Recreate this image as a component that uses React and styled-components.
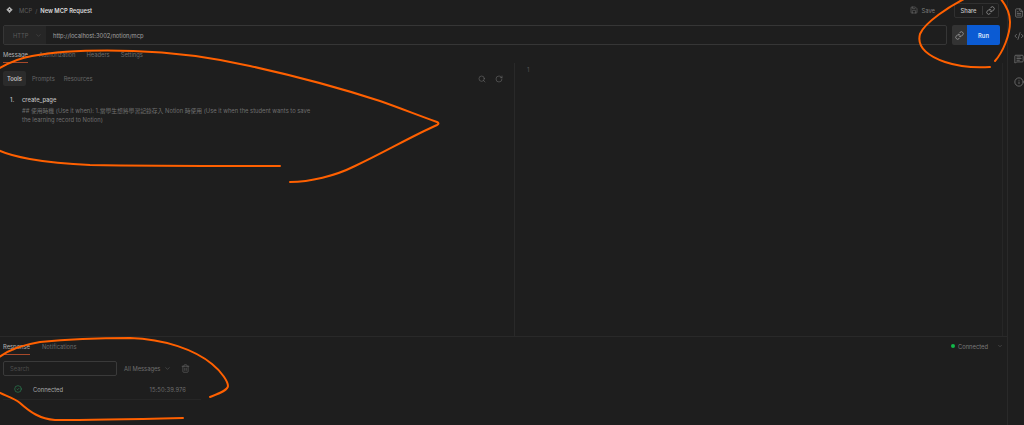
import React from 'react';
import styled, {createGlobalStyle} from 'styled-components';
import {
  Save, Link, ChevronDown, Search, RotateCw, Trash2, CircleCheck,
  FileText, CodeXml, MessageSquareText, Info,
} from 'lucide-react';

const GlobalStyle = createGlobalStyle`
  html, body { margin: 0; height: 100%; background: #1e1e1e; }
  body { font-family: Inter, "Noto Sans CJK TC", sans-serif; color: #a6a6a6; overflow: hidden; }
  * { box-sizing: border-box; }
`;

const Page = styled.div`
  position: relative;
  width: 1024px;
  height: 425px;
  display: flex;
  background: #1e1e1e;
  overflow: hidden;
`;
const Main = styled.div`
  width: 1007px;
  display: flex;
  flex-direction: column;
`;
const Sidebar = styled.aside`
  flex: 1;
  border-left: 1px solid #292929;
  display: flex;
  flex-direction: column;
  align-items: center;
  gap: 13px;
  padding: 8px 0 0 5px;
  color: #8e8e8e;
`;
const TopBar = styled.header`
  height: 20px;
  padding: 0 8px 0 6px;
  display: flex;
  align-items: center;
  font-size: 5.8px;
`;
const Crumb = styled.span`
  color: ${p => (p.$active ? '#dcdcdc' : '#5e5e5e')};
  font-weight: ${p => (p.$active ? 600 : 400)};
  margin-left: ${p => p.$gap || 0}px;
`;
const SaveButton = styled.span`
  margin-left: auto;
  display: flex;
  align-items: center;
  gap: 4px;
  color: #7c7c7c;
`;
const ShareGroup = styled.div`
  margin-left: 19px;
  width: 45px;
  height: 15px;
  display: flex;
  align-items: center;
  border: 1px solid #303030;
  border-radius: 2px;
  color: #c8c8c8;
`;
const ShareLabel = styled.span`
  flex: 1;
  text-align: center;
  font-weight: 500;
`;
const ShareLink = styled.span`
  width: 16px;
  height: 9px;
  display: flex;
  align-items: center;
  justify-content: center;
  border-left: 1px solid #3a3a3a;
`;
const UrlRow = styled.div`
  height: 20px;
  margin-top: 5px;
  padding: 0 7px 0 3px;
  display: flex;
  gap: 5px;
`;
const UrlField = styled.div`
  flex: 1;
  display: flex;
  align-items: center;
  border: 1px solid #363636;
  border-radius: 2px;
  font-size: 5.8px;
`;
const Method = styled.div`
  width: 42px;
  height: 100%;
  display: flex;
  align-items: center;
  gap: 6px;
  padding-left: 9px;
  background: #262626;
  color: #5a5a5a;
`;
const Url = styled.span`
  margin-left: 7px;
  color: #a2a2a2;
`;
const RunGroup = styled.div`
  width: 48px;
  display: flex;
  border-radius: 2px;
  overflow: hidden;
`;
const RunIcon = styled.span`
  width: 15px;
  display: flex;
  align-items: center;
  justify-content: center;
  background: #333333;
  color: #c8c8c8;
`;
const RunButton = styled.span`
  flex: 1;
  display: flex;
  align-items: center;
  justify-content: center;
  background: #0b5bd3;
  color: #dfe8fa;
  font-size: 5.8px;
  font-weight: 600;
`;
const Tabs = styled.nav`
  height: 18px;
  padding: 5px 0 0 3px;
  display: flex;
  gap: ${p => p.$gap}px;
  font-size: 5.8px;
`;
const Tab = styled.span`
  height: 13px;
  padding-top: 1px;
  color: ${p => (p.$active ? '#b4b4b4' : '#6a6a6a')};
  border-bottom: 1px solid ${p => (p.$active ? '#a8492a' : 'transparent')};
`;
const Editor = styled.section`
  height: 274px;
  display: flex;
  border-bottom: 1px solid #292929;
`;
const ToolsPane = styled.div`
  width: 515px;
  border-right: 1px solid #292929;
  padding: 8px 11px 0 3px;
`;
const SubBar = styled.div`
  display: flex;
  align-items: center;
  font-size: 5.8px;
  color: #6e6e6e;
`;
const SubTab = styled.span`
  height: 15px;
  display: flex;
  align-items: center;
  padding: 0 ${p => p.$pad || 0}px;
  margin-right: ${p => p.$gap || 0}px;
  border-radius: 2px;
  background: ${p => (p.$active ? '#2b2b2b' : 'transparent')};
  color: ${p => (p.$active ? '#d0d0d0' : '#666666')};
  font-weight: ${p => (p.$active ? 500 : 400)};
`;
const SubIcons = styled.span`
  margin-left: auto;
  display: flex;
  gap: 9px;
  color: #777777;
`;
const ToolItem = styled.div`
  display: flex;
  margin: 9px 0 0 7px;
  font-size: 5.8px;
  line-height: 9px;
`;
const ToolIndex = styled.span`
  width: 12px;
  color: #c0c0c0;
  font-weight: 500;
`;
const ToolBody = styled.div`
  width: 294px;
`;
const ToolName = styled.div`
  color: #c0c0c0;
  font-weight: 500;
  margin-bottom: 2px;
`;
const ToolText = styled.div`
  color: #6f6f6f;
`;
const ResultPane = styled.div`
  flex: 1;
  padding: 3px 0 0 12px;
  font-size: 5.8px;
  color: #565656;
  border-right: 1px solid #262626;
  margin-right: 4px;
`;
const ResponseHead = styled.div`
  height: 18px;
  display: flex;
  justify-content: space-between;
  padding-right: 4px;
`;
const Status = styled.div`
  display: flex;
  align-items: center;
  gap: 3px;
  font-size: 5.8px;
  color: #7a7a7a;
`;
const StatusChevron = styled(ChevronDown)`
  margin-left: 6px;
`;
const Dot = styled.span`
  width: 4px;
  height: 4px;
  border-radius: 50%;
  background: #12b84a;
`;
const Filters = styled.div`
  width: 201px;
  margin: 6px 0 0 3px;
  display: flex;
  align-items: center;
  font-size: 5.8px;
`;
const SearchBox = styled.div`
  width: 114px;
  height: 15px;
  display: flex;
  align-items: center;
  padding-left: 6px;
  border: 1px solid #3a3a3a;
  border-radius: 2px;
  color: #4c4c4c;
`;
const Select = styled.span`
  margin-left: 7px;
  display: flex;
  align-items: center;
  gap: 4px;
  color: #6e6e6e;
`;
const TrashWrap = styled.span`
  margin-left: 10px;
  display: flex;
  color: #6e6e6e;
`;
const LogRow = styled.div`
  width: 198px;
  height: 23px;
  margin: 1px 0 0 3px;
  display: flex;
  align-items: center;
  padding: 2px 0 0 11px;
  font-size: 5.8px;
  border-bottom: 1px solid #262626;
`;
const LogText = styled.span`
  margin-left: 11px;
  color: #a8a8a8;
`;
const LogTime = styled.span`
  margin-left: auto;
  padding-right: 15px;
  color: #6e6e6e;
  letter-spacing: 0.1px;
`;
const Scribble = styled.svg`
  position: absolute;
  inset: 0;
  pointer-events: none;
`;
const Stroke = styled.path`
  fill: none;
  stroke: #ff6000;
  stroke-width: 2;
  stroke-linecap: round;
  stroke-linejoin: round;
`;

// marker strokes someone drew on top of the screenshot
const strokes = [
  'M-2 69C10 62 20 58 32 56C60 51 100 50 133 51C170 52 210 57 250 66C300 77 340 88 380 101C400 108 420 116 437 122C439 123 439 124 437 125C410 137 385 152 355 166C335 176 310 182 290 182',
  'M-2 150C10 156 40 163 90 165C150 166 220 166 280 166',
  'M966 -2C950 6 925 22 920 34C917 45 925 55 945 62C960 67 975 68 990 67',
  'M1000 -2C1006 5 1010 14 1010 22C1010 35 1003 52 995 61',
  'M-2 358C8 350 22 345 40 342C70 339 100 338 130 338C165 339 195 350 212 364C222 372 228 382 228 386C228 390 220 393 210 397',
  'M-2 392C6 396 14 398 20 403C30 412 40 419 55 420C90 420 140 419 183 418',
];

const McpLogo = () => (
  <svg width="7" height="8" viewBox="0 0 12 12" fill="#b0b0b0">
    <path d="M6 0.5 11.5 5.5 7.5 9.5 6 11.5 4.5 9.5 0.5 5.5Z" />
    <circle cx="6" cy="5" r="1" fill="#1e1e1e" />
  </svg>
);

const App = () => {
  return (
    <Page>
      <GlobalStyle />
      <Main>
        <TopBar>
          <McpLogo />
          <Crumb $gap={6}>MCP</Crumb>
          <Crumb $gap={3}>/</Crumb>
          <Crumb $active $gap={3}>New MCP Request</Crumb>
          <SaveButton><Save size={8} strokeWidth={1.5} />Save</SaveButton>
          <ShareGroup>
            <ShareLabel>Share</ShareLabel>
            <ShareLink><Link size={9} strokeWidth={1.5} /></ShareLink>
          </ShareGroup>
        </TopBar>
        <UrlRow>
          <UrlField>
            <Method>HTTP <ChevronDown size={7} strokeWidth={1.5} /></Method>
            <Url>http://localhost:3002/notion/mcp</Url>
          </UrlField>
          <RunGroup>
            <RunIcon><Link size={9} strokeWidth={1.5} /></RunIcon>
            <RunButton>Run</RunButton>
          </RunGroup>
        </UrlRow>
        <Tabs $gap={11}>
          <Tab $active>Message</Tab>
          <Tab>Authorization</Tab>
          <Tab>Headers</Tab>
          <Tab>Settings</Tab>
        </Tabs>
        <Editor>
          <ToolsPane>
            <SubBar>
              <SubTab $active $pad={4} $gap={6}>Tools</SubTab>
              <SubTab $gap={9}>Prompts</SubTab>
              <SubTab>Resources</SubTab>
              <SubIcons>
                <Search size={8} strokeWidth={1.5} />
                <RotateCw size={8} strokeWidth={1.5} />
              </SubIcons>
            </SubBar>
            <ToolItem>
              <ToolIndex>1.</ToolIndex>
              <ToolBody>
                <ToolName>create_page</ToolName>
                <ToolText>## 使用時機 (Use it when): 1.當學生想將學習記錄存入 Notion 時使用 (Use it when the student wants to save the learning record to Notion)</ToolText>
              </ToolBody>
            </ToolItem>
          </ToolsPane>
          <ResultPane>1</ResultPane>
        </Editor>
        <ResponseHead>
          <Tabs $gap={12}>
            <Tab $active>Response</Tab>
            <Tab>Notifications</Tab>
          </Tabs>
          <Status>
            <Dot />
            Connected
            <StatusChevron size={6} strokeWidth={1.5} />
          </Status>
        </ResponseHead>
        <Filters>
          <SearchBox>Search</SearchBox>
          <Select>All Messages <ChevronDown size={7} strokeWidth={1.5} /></Select>
          <TrashWrap><Trash2 size={9} strokeWidth={1.5} /></TrashWrap>
        </Filters>
        <LogRow>
          <CircleCheck size={8} strokeWidth={1.5} color="#2f9e62" />
          <LogText>Connected</LogText>
          <LogTime>15:50:39.976</LogTime>
        </LogRow>
      </Main>
      <Sidebar>
        <FileText size={10} strokeWidth={1.5} />
        <CodeXml size={10} strokeWidth={1.5} />
        <MessageSquareText size={10} strokeWidth={1.5} />
        <Info size={10} strokeWidth={1.5} />
      </Sidebar>
      <Scribble width="1024" height="425" viewBox="0 0 1024 425">
        {strokes.map((d, i) => <Stroke key={i} d={d} />)}
      </Scribble>
    </Page>
  );
};

export default App;
